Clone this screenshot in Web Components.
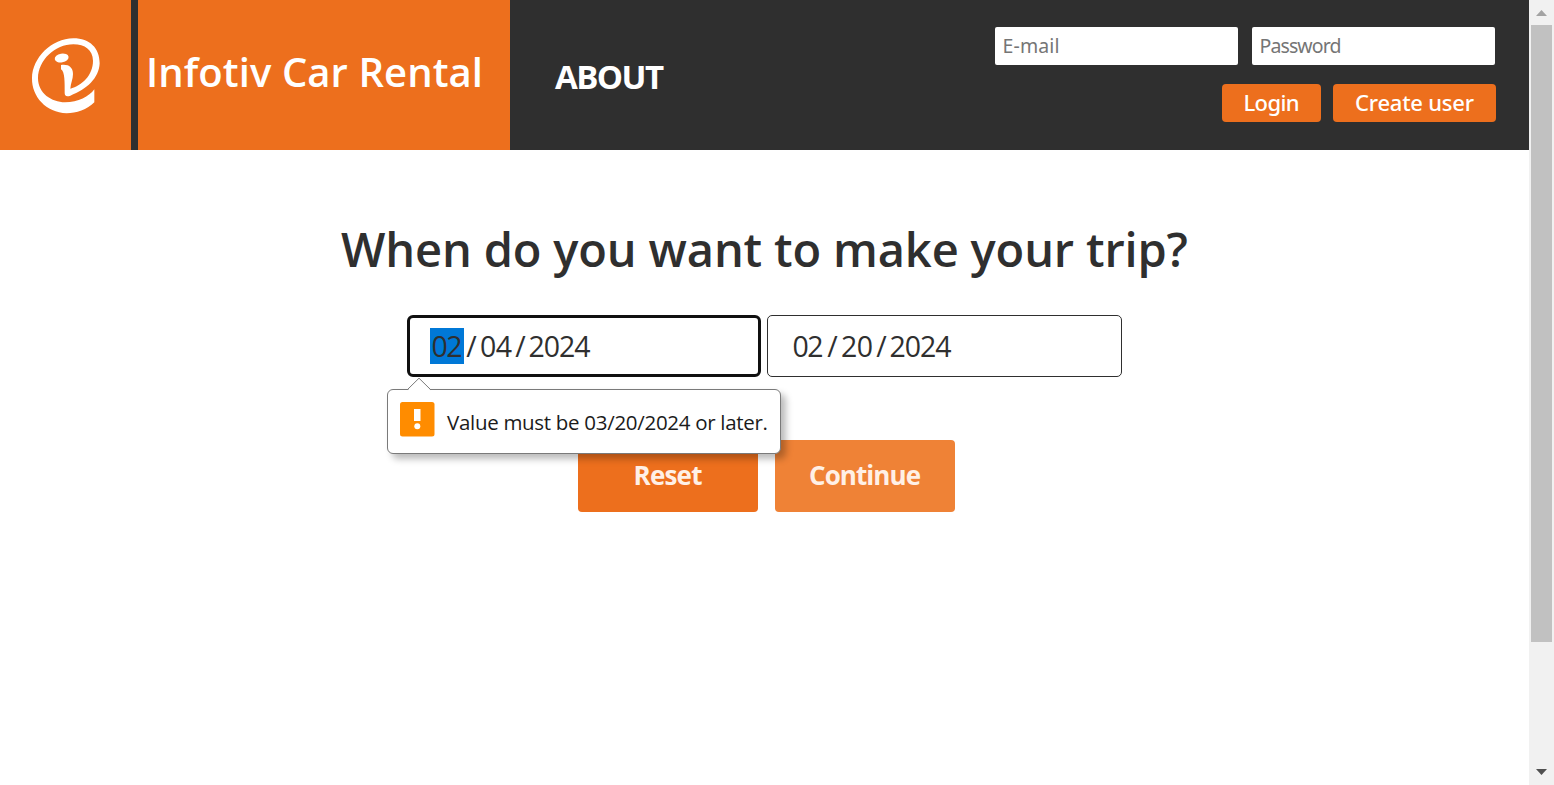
<!DOCTYPE html>
<html lang="en">
<head>
<meta charset="utf-8">
<title>Infotiv Car Rental</title>
<style>
html,body{margin:0;height:100%;overflow:hidden;background:#fff;color:#2f2f2f;font-family:"Open Sans","Noto Sans",sans-serif}
</style>
</head>
<body>
<rental-page></rental-page>
<script>
function define(name, html, setup) {
  const t = document.createElement('template');
  t.innerHTML = html;
  customElements.define(name, class extends HTMLElement {
    connectedCallback() {
      if (this.shadowRoot) return;
      this.attachShadow({ mode: 'open' }).appendChild(t.content.cloneNode(true));
      if (setup) setup(this);
    }
  });
}

// A single line of text tracked so that it fills the given width.
define('fit-text', `<style>:host{display:inline-block;white-space:nowrap;text-align:left}span{display:inline-block}</style><span><slot></slot></span>`, el => {
  const w = +el.getAttribute('width');
  const span = el.shadowRoot.querySelector('span');
  el.style.width = w + 'px';
  const n = el.textContent.length;
  const natural = span.getBoundingClientRect().width;
  span.style.letterSpacing = ((w - natural) / (n - 1)) + 'px';
});

define('brand-logo', `<style>:host{display:flow-root;width:130.5px;height:150px;background:#ed6f1d}svg{display:block;margin:30px 0 0 20px}</style>
<svg width="90" height="90" viewBox="0 0 270 270" fill="#fff"><path d="M223 178V217C202 239 168 250 140 250C78 248 35 200 36 145C37 83 95 26 160 25C210 25 239 55 239 100C237 145 200 178 151 197C138 201 134 197 134 188C134 160 135 125 123 118V105C146 102 159 112 159 132C159 147 152 160 151 176C186 166 219 136 219 92C218 60 195 43 160 43C105 43 55 90 54 145C54 190 95 217 135 217C175 217 207 200 223 178Z"/><ellipse cx="125" cy="84" rx="21" ry="13" transform="rotate(-10 125 84)"/></svg>`);

define('text-field', `<style>:host{display:flex;align-items:center;box-sizing:border-box;width:243px;height:38px;padding:0 0 0 7.500px;background:#fff;border-radius:2px;color:#757575;font:19.500px/36px "Noto Sans",sans-serif}</style><slot></slot>`);

define('small-button', `<style>:host{display:flex;align-items:center;justify-content:center;box-sizing:border-box;height:38px;padding-bottom:2px;background:#ed6f1d;border-radius:4px;color:#fff;font:500 22px/36px "Noto Sans",sans-serif}</style><slot></slot>`);

define('site-header', `<style>
:host{display:flex;height:150px;background:#2f2f2f;color:#fff}
.brand{margin-left:7.500px;width:372px;box-sizing:border-box;padding:42px 0 0 8px;background:#ed6f1d;font-size:40px;font-weight:600;line-height:60px}
.nav{padding:52px 0 0 45px;font-size:33px;font-weight:700;line-height:50px}
.account{margin-left:auto;padding:27px 33px 0 0;display:flex;flex-direction:column;gap:19px}
.row{display:flex;justify-content:flex-end;gap:12px}
.fields{gap:14px;padding-right:1px}
.login{width:99px}.create{width:163px}
</style>
<brand-logo></brand-logo>
<div class="brand"><fit-text width="337">Infotiv Car Rental</fit-text></div>
<div class="nav"><fit-text width="109">ABOUT</fit-text></div>
<div class="account">
<div class="row fields"><text-field><fit-text width="57">E-mail</fit-text></text-field><text-field><fit-text width="82">Password</fit-text></text-field></div>
<div class="row"><small-button class="login"><fit-text width="56">Login</fit-text></small-button><small-button class="create"><fit-text width="119">Create user</fit-text></small-button></div>
</div>`);

define('trip-date', `<style>
:host{display:block}
.box{display:flex;align-items:center;box-sizing:border-box;width:355px;height:62px;border:1px solid #2f2f2f;border-radius:5px;padding-left:23px;font-size:28.500px;line-height:36px;background:#fff}
:host([focused]) .box{width:354px;border:3px solid #101010;border-radius:6px;padding-left:20px}
slot{display:flex;justify-content:center;width:34px}
slot[name=year]{width:63px}
i{font-style:normal;width:15px;text-align:center}
:host([focused]) slot[name=month]{background:#0078d7}
</style><div class="box"><slot name="month"></slot><i>/</i><slot name="day"></slot><i>/</i><slot name="year"></slot></div>`);

define('action-button', `<style>:host{display:flex;align-items:center;justify-content:center;box-sizing:border-box;width:180px;height:72px;padding-bottom:2px;background:#ed6f1d;border-radius:4px;color:#fff0e6;font-size:26px;font-weight:700;line-height:36px}:host([soft]){background:#ef8236}</style><slot></slot>`);

define('validation-bubble', `<style>
:host{position:absolute;left:387px;top:389px;box-sizing:border-box;width:394px;height:65px;border:1px solid #7a7a7a;border-radius:6px;background:#fff;box-shadow:5px 5px 7px rgba(0,0,0,.27);display:flex;align-items:center;padding-left:12px;color:#1b1b1b;font-size:20.500px;line-height:30px}
.tip{position:absolute;left:18px;top:-13px}
.icon{margin:-5px 12px 0 0;flex:none}
</style>
<svg class="tip" width="28" height="14" viewBox="0 0 28 14"><path d="M1.500 13.500L13 1.500L25 13.500" fill="#fff"/><path d="M1 13L13 1.200L25 13" fill="none" stroke="#7a7a7a"/></svg>
<svg class="icon" width="35" height="35" viewBox="0 0 35 35"><rect width="34.500" height="34.500" rx="2.500" fill="#ff8c00"/><path d="M14 7H20.500V19H14Z" fill="#fff"/><circle cx="17.300" cy="24.300" r="3" fill="#fff"/></svg>
<slot></slot>`);

define('page-scrollbar', `<style>
:host{display:flex;flex-direction:column;width:25px;height:785px;background:#f1f1f1}
.thumb{height:617px;margin:0 2px;background:#c1c1c1}
.up,.down{display:block;width:25px;height:25px}
.down{margin-top:auto}
</style><svg class="up" viewBox="0 0 25 25"><path d="M7 16H18L12.500 10Z" fill="#a3a3a3"/></svg><div class="thumb"></div><svg class="down" viewBox="0 0 25 25"><path d="M7 9H18L12.500 15Z" fill="#505050"/></svg>`);

define('rental-page', `<style>
:host{display:grid;grid-template-columns:1529px 25px;height:785px;position:relative}
main{display:flex;flex-direction:column;align-items:center}
h1{margin:64px 0 0;font-size:47px;font-weight:600;line-height:70px}
.dates{display:flex;gap:6px;margin:31px 0 0}
.actions{display:flex;gap:17px;margin:63px 0 0 4px}
</style>
<div><site-header></site-header>
<main>
<h1><fit-text width="847">When do you want to make your trip?</fit-text></h1>
<div class="dates">
<trip-date focused><fit-text slot="month" width="31">02</fit-text><fit-text slot="day" width="32">04</fit-text><fit-text slot="year" width="62">2024</fit-text></trip-date>
<trip-date><fit-text slot="month" width="31">02</fit-text><fit-text slot="day" width="32">20</fit-text><fit-text slot="year" width="62">2024</fit-text></trip-date>
</div>
<div class="actions"><action-button><fit-text width="69">Reset</fit-text></action-button><action-button soft><fit-text width="112">Continue</fit-text></action-button></div>
</main></div>
<page-scrollbar></page-scrollbar>
<validation-bubble><fit-text width="321">Value must be 03/20/2024 or later.</fit-text></validation-bubble>`);
</script>
</body>
</html>
